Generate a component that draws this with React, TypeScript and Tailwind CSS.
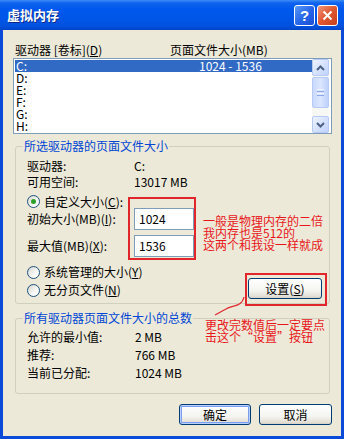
import type { ReactNode } from 'react'

function Radio({ checked }: { checked?: boolean }) {
  return (
    <span className="w-[13px] h-[13px] shrink-0 rounded-full border border-[#1c5180] bg-[linear-gradient(135deg,#d6d6cf,#ffffff_75%)] flex items-center justify-center">
      {checked && <span className="w-[5px] h-[5px] rounded-full bg-[#2aa22a]" />}
    </span>
  )
}

function XPButton({ children, isDefault, className }: { children: ReactNode; isDefault?: boolean; className?: string }) {
  return (
    <div
      className={`h-[21px] rounded-[3px] border border-[#003c74] bg-[linear-gradient(to_bottom,#ffffff,#f4f4f0_60%,#e3e0d6_90%,#d6d0c5)] flex items-center justify-center ${
        isDefault ? 'shadow-[inset_0_0_0_1px_#b9d1fa,inset_0_0_0_2px_#7b9ef0]' : ''
      } ${className ?? ''}`}
    >
      {children}
    </div>
  )
}

function Chevron({ up }: { up?: boolean }) {
  return (
    <svg width="9" height="6" viewBox="0 0 9 6">
      <path
        d={up ? 'M1 5 L4.5 1.5 L8 5' : 'M1 1 L4.5 4.5 L8 1'}
        fill="none"
        stroke="#4d6185"
        strokeWidth="2"
      />
    </svg>
  )
}

function ScrollBar() {
  return (
    <div className="w-[17px] bg-[#f7f7f3] flex flex-col">
      <div className="h-[17px] rounded-[2px] border border-[#b7caf5] bg-[linear-gradient(135deg,#eef3ff,#bfd2fc)] flex items-center justify-center">
        <Chevron up />
      </div>
      <div className="mt-[1px] h-[31px] rounded-[2px] border border-[#b7caf5] bg-[linear-gradient(to_right,#c9d9fd,#dbe6fe_50%,#bed1fb)] flex flex-col items-center justify-center gap-[1px]">
        <span className="w-[7px] h-[1px] bg-[#eef3ff]" />
        <span className="w-[7px] h-[1px] bg-[#8ca6e8]" />
        <span className="w-[7px] h-[1px] bg-[#eef3ff]" />
        <span className="w-[7px] h-[1px] bg-[#8ca6e8]" />
      </div>
      <div className="flex-1" />
      <div className="h-[17px] rounded-[2px] border border-[#b7caf5] bg-[linear-gradient(135deg,#eef3ff,#bfd2fc)] flex items-center justify-center">
        <Chevron />
      </div>
    </div>
  )
}

function TitleBar() {
  return (
    <div className="h-[30px] shrink-0 flex items-center pl-[7px] pr-[6px] bg-[linear-gradient(to_bottom,#3d8cf7_0%,#0f63ee_10%,#0058ee_30%,#0055e5_70%,#0050dc_90%,#0042c4_100%)]">
      <span className="text-white text-[13px] font-bold leading-[14px] [text-shadow:1px_1px_0_#0a2a8a]">虚拟内存</span>
      <div className="ml-auto flex gap-[2px]">
        <div className="w-[21px] h-[21px] rounded-[3px] border border-white bg-[linear-gradient(135deg,#5b9af8,#2563e8_55%,#1a4fd4)] flex items-center justify-center text-white text-[15px] font-bold leading-none font-['Liberation_Sans',sans-serif]">
          ?
        </div>
        <div className="w-[21px] h-[21px] rounded-[3px] border border-white bg-[linear-gradient(135deg,#f0967a,#e0572f_50%,#c6401d)] flex items-center justify-center">
          <svg width="11" height="11" viewBox="0 0 11 11">
            <path d="M1.5 1.5 L9.5 9.5 M9.5 1.5 L1.5 9.5" stroke="white" strokeWidth="2" />
          </svg>
        </div>
      </div>
    </div>
  )
}

const drives = ['C:', 'D:', 'E:', 'F:', 'G:', 'H:']

export default function App() {
  return (
    <div className="w-[344px] h-[439px] bg-[#0b4bd9] flex flex-col font-['Noto_Sans_CJK_SC',sans-serif] text-[12px] text-black">
      <TitleBar />
      <div className="relative mx-[3px] mb-[3px] flex-1 bg-[#ece9d8] flex flex-col">
        {/* list header */}
        <div className="mt-[14px] h-[12px] flex items-center leading-[12px]">
          <span className="ml-[12px] w-[155px]">
            驱动器 [卷标](<u>D</u>)
          </span>
          <span>页面文件大小(MB)</span>
        </div>

        {/* drive list */}
        <div className="mt-[2px] ml-[10px] w-[319px] h-[76px] border border-[#7f9db9] bg-white flex">
          <div className="ml-[1px] w-[297px] pt-[1px] flex flex-col">
            {drives.map((d, i) => (
              <div
                key={d}
                className={`h-[12px] flex items-center leading-[12px] pl-[1px] ${i === 0 ? 'bg-[#316ac5] text-white' : ''}`}
              >
                <span className="w-[183px]">{d}</span>
                {i === 0 && <span>1024 - 1536</span>}
              </div>
            ))}
          </div>
          <ScrollBar />
        </div>

        {/* selected drive group */}
        <div className="relative mt-[12px] ml-[12px] w-[315px] h-[158px] rounded-[3px] border border-[#d0d0bf] pl-[11px] pt-[11px] flex flex-col">
          <span className="absolute left-[7px] top-[-8px] px-[1px] bg-[#ece9d8] text-[#0046d5] leading-[14px]">
            所选驱动器的页面文件大小
          </span>
          <div className="h-[16px] flex items-center">
            <span className="w-[107px]">驱动器:</span>
            <span>C:</span>
          </div>
          <div className="h-[15px] flex items-center">
            <span className="w-[107px]">可用空间:</span>
            <span>13017 MB</span>
          </div>
          <div className="mt-[6px] h-[13px] flex items-center gap-[4px]">
            <Radio checked />
            <span>
              自定义大小(<u>C</u>):
            </span>
          </div>
          <div className="h-[22px] flex items-center">
            <span className="w-[107px]">
              初始大小(MB)(<u>I</u>):
            </span>
            <div className="w-[60px] h-[22px] border border-[#7f9db9] bg-white pl-[4px] flex items-center">1024</div>
          </div>
          <div className="mt-[5px] h-[22px] flex items-center">
            <span className="w-[107px]">
              最大值(MB)(<u>X</u>):
            </span>
            <div className="w-[60px] h-[22px] border border-[#7f9db9] bg-white pl-[4px] flex items-center">1536</div>
          </div>
          <div className="mt-[8px] flex">
            <div className="flex flex-col">
              <div className="h-[14px] flex items-center gap-[4px]">
                <Radio />
                <span>
                  系统管理的大小(<u>Y</u>)
                </span>
              </div>
              <div className="mt-[4px] h-[14px] flex items-center gap-[4px]">
                <Radio />
                <span>
                  无分页文件(<u>N</u>)
                </span>
              </div>
            </div>
            <XPButton className="ml-auto mr-[7px] mt-[13px] w-[74px]">
              设置(<u>S</u>)
            </XPButton>
          </div>
        </div>

        {/* totals group */}
        <div className="relative mt-[14px] ml-[12px] w-[315px] h-[76px] rounded-[3px] border border-[#d0d0bf] pl-[11px] pt-[9px] flex flex-col">
          <span className="absolute left-[7px] top-[-8px] px-[1px] bg-[#ece9d8] text-[#0046d5] leading-[14px]">
            所有驱动器页面文件大小的总数
          </span>
          <div className="h-[18px] flex items-center">
            <span className="w-[108px]">允许的最小值:</span>
            <span>2 MB</span>
          </div>
          <div className="h-[18px] flex items-center">
            <span className="w-[108px]">推荐:</span>
            <span>766 MB</span>
          </div>
          <div className="h-[18px] flex items-center">
            <span className="w-[108px]">当前已分配:</span>
            <span>1024 MB</span>
          </div>
        </div>

        {/* dialog buttons */}
        <div className="mt-[10px] ml-[176px] flex gap-[8px]">
          <XPButton isDefault className="w-[72px]">
            确定
          </XPButton>
          <XPButton className="w-[73px]">取消</XPButton>
        </div>

        {/* red annotations */}
        <div className="absolute left-[125px] top-[167px] w-[68px] h-[63px] border-2 border-[#e0262b]" />
        <div className="absolute left-[200px] top-[185px] text-[#e8161b] leading-[12px] whitespace-nowrap">
          <div>一般是物理内存的二倍</div>
          <div>我内存也是512的</div>
          <div>这两个和我设一样就成</div>
        </div>
        <div className="absolute left-[242px] top-[243px] w-[82px] h-[33px] border-2 border-[#e0262b]" />
        <svg className="absolute left-[205px] top-[265px]" width="40" height="24" viewBox="0 0 40 24">
          <path d="M36 2 C34 12, 24 10, 18 14 C14 16, 11 18, 7 20" fill="none" stroke="#e0262b" strokeWidth="1.2" />
        </svg>
        <div className="absolute left-[202px] top-[289px] text-[#e8161b] leading-[12px] whitespace-nowrap">
          <div>更改完数值后一定要点</div>
          <div>击这个“设置”按钮</div>
        </div>
      </div>
    </div>
  )
}
